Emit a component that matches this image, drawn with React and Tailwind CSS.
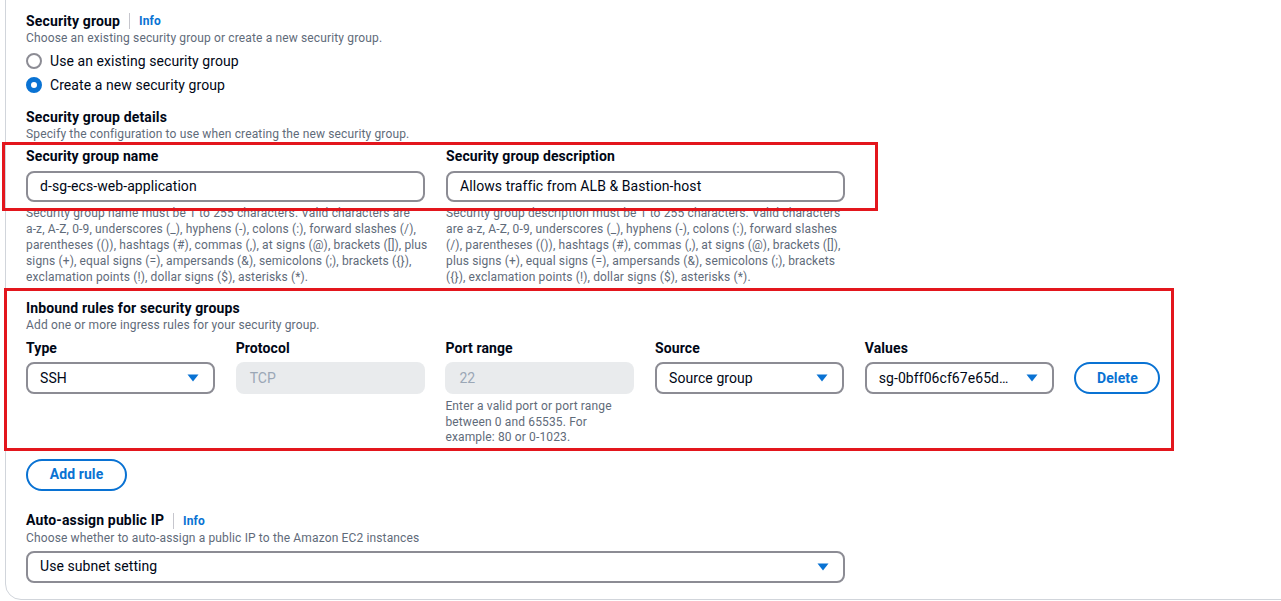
import React from "react";

// dropdown caret, filled blue triangle
function Caret() {
  return (
    <svg width="12" height="8" viewBox="0 0 12 8" className="shrink-0">
      <path d="M0.5 0.5 L11.5 0.5 L6 7.5 Z" fill="#0972d3" />
    </svg>
  );
}

function Select({ value, className = "" }) {
  return (
    <div
      className={`flex items-center justify-between h-[32px] border-2 border-[#8c8c94] rounded-[8px] pl-[12px] pr-[14px] bg-white ${className}`}
    >
      <span className="text-[14px] tracking-[0.07px] text-[#000716] truncate">{value}</span>
      <Caret />
    </div>
  );
}

function Disabled({ value }) {
  return (
    <div className="flex items-center h-[32px] rounded-[8px] pl-[14px] bg-[#e9ebed]">
      <span className="text-[14px] text-[#9ba7b6]">{value}</span>
    </div>
  );
}

function Radio({ checked, label }) {
  return (
    <div className="flex items-center h-[24px] gap-[8px]">
      {checked ? (
        <span className="w-[16px] h-[16px] rounded-full border-[5px] border-[#0972d3] bg-white" />
      ) : (
        <span className="w-[16px] h-[16px] rounded-full border-2 border-[#8c8c94] bg-white" />
      )}
      <span className="text-[14px] tracking-[0.07px] text-[#000716]">{label}</span>
    </div>
  );
}

function Heading({ children, info }) {
  return (
    <div className="flex items-center h-[18px]">
      <span className="text-[14px] tracking-[0.15px] font-bold text-[#000716]">{children}</span>
      {info && (
        <>
          <span className="mx-[9px] w-px h-[16px] bg-[#c6c6cd]" />
          <span className="text-[12px] tracking-[0.1px] font-bold text-[#0972d3]">Info</span>
        </>
      )}
    </div>
  );
}

function Desc({ children }) {
  return <div className="text-[12px] leading-[16px] tracking-[0.14px] text-[#5f6b7a]">{children}</div>;
}

function Label({ children }) {
  return <div className="text-[14px] leading-[20px] tracking-[0.1px] font-bold text-[#000716]">{children}</div>;
}

const ruleTail =
  " A-Z, 0-9, underscores (_), hyphens (-), colons (:), forward slashes (/), parentheses (()), hashtags (#), commas (,), at signs (@), brackets ([]), plus signs (+), equal signs (=), ampersands (&), semicolons (;), brackets ({}), exclamation points (!), dollar signs ($), asterisks (*).";

function Rule({ what }) {
  return (
    <Desc>
      Security group {what} must be 1 to 255 characters. Valid characters are{" "}
      <span className="whitespace-nowrap">a-z,</span>
      {ruleTail}
    </Desc>
  );
}

export default function App() {
  return (
    <div
      className="relative w-[1281px] h-[601px] overflow-hidden bg-white"
      style={{ fontFamily: "Roboto, 'Liberation Sans', sans-serif" }}
    >
      <div className="ml-[5px] -mt-[20px] w-[1300px] h-[620px] border border-[#d1d5db] rounded-b-[16px] pt-[31px] pl-[20px]">
        <Heading info>Security group</Heading>
        <Desc>Choose an existing security group or create a new security group.</Desc>
        <div className="mt-[3px]">
          <Radio label="Use an existing security group" />
          <Radio checked label="Create a new security group" />
        </div>

        <div className="mt-[11px]">
          <Heading>Security group details</Heading>
          <Desc>Specify the configuration to use when creating the new security group.</Desc>
        </div>

        <div className="flex gap-[21px] mt-[4px]">
          <div className="w-[399px]">
            <Label>Security group name</Label>
            <div className="mt-[5px] h-[31px] border-2 border-[#8c8c94] rounded-[8px] pl-[12px] flex items-center text-[14px] tracking-[0.07px] text-[#000716]">
              d-sg-ecs-web-application
            </div>
            <div className="mt-[3px] -mr-[4px]">
              <Rule what="name" />
            </div>
          </div>
          <div className="w-[399px]">
            <Label>Security group description</Label>
            <div className="mt-[5px] h-[31px] border-2 border-[#8c8c94] rounded-[8px] pl-[12px] flex items-center text-[14px] tracking-[0.07px] text-[#000716]">
              Allows traffic from ALB &amp; Bastion-host
            </div>
            <div className="mt-[3px]">
              <Rule what="description" />
            </div>
          </div>
        </div>

        <div className="mt-[14px]">
          <Heading>Inbound rules for security groups</Heading>
          <Desc>Add one or more ingress rules for your security group.</Desc>
        </div>

        <div className="flex gap-[20.7px] mt-[5px] items-start">
          <div className="w-[189px]">
            <Label>Type</Label>
            <Select className="mt-[4px]" value="SSH" />
          </div>
          <div className="w-[189px]">
            <Label>Protocol</Label>
            <div className="mt-[4px]">
              <Disabled value="TCP" />
            </div>
          </div>
          <div className="w-[189px]">
            <Label>Port range</Label>
            <div className="mt-[4px]">
              <Disabled value="22" />
            </div>
            <div className="mt-[5px] text-[12px] leading-[15.5px] tracking-[0.14px] text-[#5f6b7a]">
              Enter a valid port or port range between 0 and 65535. For example: 80 or 0-1023.
            </div>
          </div>
          <div className="w-[189px]">
            <Label>Source</Label>
            <Select className="mt-[4px]" value="Source group" />
          </div>
          <div className="w-[189px]">
            <Label>Values</Label>
            <Select className="mt-[4px]" value="sg-0bff06cf67e65d…" />
          </div>
          <div className="pt-[24px]">
            <button className="h-[32px] w-[86px] rounded-full border-2 border-[#0972d3] text-[14px] tracking-[0.1px] font-bold text-[#0972d3]">
              Delete
            </button>
          </div>
        </div>

        <button className="mt-[13px] h-[32px] w-[101px] rounded-full border-2 border-[#0972d3] text-[14px] tracking-[0.1px] font-bold text-[#0972d3]">
          Add rule
        </button>

        <div className="mt-[21px]">
          <Heading info>Auto-assign public IP</Heading>
          <Desc>Choose whether to auto-assign a public IP to the Amazon EC2 instances</Desc>
        </div>
        <Select className="mt-[5px] w-[819px] h-[31px]" value="Use subnet setting" />
      </div>

      {/* red annotation boxes */}
      <div className="absolute left-[2px] top-[142px] w-[876px] h-[69px] border-[3px] border-[#e3161d]" />
      <div className="absolute left-[4px] top-[288px] w-[1170px] h-[163px] border-[3px] border-[#e3161d]" />
    </div>
  );
}
